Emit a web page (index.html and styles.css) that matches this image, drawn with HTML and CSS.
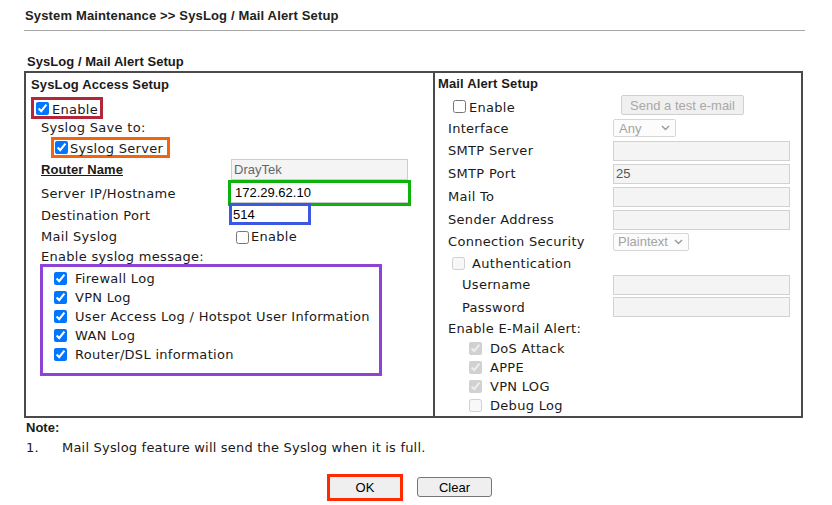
FILE: index.html
```html
<!DOCTYPE html>
<html>
<head>
<meta charset="utf-8">
<title>SysLog / Mail Alert Setup</title>
<link rel="stylesheet" href="styles.css">
</head>
<body>
<div class="page">
  <div class="hdr">System Maintenance &gt;&gt; SysLog / Mail Alert Setup</div>
  <div class="rule"></div>
  <div class="caption">SysLog / Mail Alert Setup</div>
  <div class="tbl">
    <div class="cell left">
      <div class="title">SysLog Access Setup</div>
      <div class="r-enable"><label class="hl hl-red"><input type="checkbox" class="cb" checked><span class="t">Enable</span></label></div>
      <div class="r-save">Syslog Save to:</div>
      <div class="r-server"><label class="hl hl-orange"><input type="checkbox" class="cb" checked><span class="t">Syslog Server</span></label></div>
      <div class="lrow r-name"><span class="lab bold">Router Name</span><input class="txt ro" value="DrayTek" readonly></div>
      <div class="lrow r-ip"><span class="lab">Server IP/Hostname</span><span class="hl hl-green"><input class="txt bare ip" value="172.29.62.10"></span></div>
      <div class="lrow r-port"><span class="lab">Destination Port</span><span class="hl hl-blue"><input class="txt bare port" value="514"></span></div>
      <div class="lrow r-mail"><span class="lab">Mail Syslog</span><input type="checkbox" class="cb cb-mail"><span>Enable</span></div>
      <div class="r-msg">Enable syslog message:</div>
      <div class="hl-purple">
        <label class="item"><input type="checkbox" class="cb" checked><span>Firewall Log</span></label>
        <label class="item"><input type="checkbox" class="cb" checked><span>VPN Log</span></label>
        <label class="item"><input type="checkbox" class="cb" checked><span>User Access Log / Hotspot User Information</span></label>
        <label class="item"><input type="checkbox" class="cb" checked><span>WAN Log</span></label>
        <label class="item"><input type="checkbox" class="cb" checked><span>Router/DSL information</span></label>
      </div>
    </div>
    <div class="cell right">
      <div class="title">Mail Alert Setup</div>
      <div class="r-en2">
        <label class="en2-lab"><input type="checkbox" class="cb"><span class="t2">Enable</span></label>
        <button class="btn-test" disabled>Send a test e-mail</button>
      </div>
      <div class="rrow h22"><span class="rlab">Interface</span><span class="sel sel-any">Any<svg class="chev" width="9" height="6" viewBox="0 0 9 6"><polyline points="1,1 4.5,4.5 8,1" fill="none" stroke="#999" stroke-width="1.4"/></svg></span></div>
      <div class="rrow h23"><span class="rlab">SMTP Server</span><input class="txt dis" disabled></div>
      <div class="rrow h23"><span class="rlab">SMTP Port</span><input class="txt dis" value="25" disabled></div>
      <div class="rrow h23"><span class="rlab">Mail To</span><input class="txt dis" disabled></div>
      <div class="rrow h23"><span class="rlab">Sender Address</span><input class="txt dis" disabled></div>
      <div class="rrow h21"><span class="rlab">Connection Security</span><span class="sel sel-plain">Plaintext<svg class="chev" width="9" height="6" viewBox="0 0 9 6"><polyline points="1,1 4.5,4.5 8,1" fill="none" stroke="#999" stroke-width="1.4"/></svg></span></div>
      <label class="r-auth"><input type="checkbox" class="cb" disabled><span>Authentication</span></label>
      <div class="rrow sub h23"><span class="rlab">Username</span><input class="txt dis" disabled></div>
      <div class="rrow sub h22"><span class="rlab">Password</span><input class="txt dis" disabled></div>
      <div class="r-alert">Enable E-Mail Alert:</div>
      <label class="aitem"><input type="checkbox" class="cb" checked disabled><span>DoS Attack</span></label>
      <label class="aitem"><input type="checkbox" class="cb" checked disabled><span>APPE</span></label>
      <label class="aitem"><input type="checkbox" class="cb" checked disabled><span>VPN LOG</span></label>
      <label class="aitem"><input type="checkbox" class="cb" disabled><span>Debug Log</span></label>
    </div>
  </div>
  <div class="note-h">Note:</div>
  <div class="note-1"><span class="num">1.</span><span>Mail Syslog feature will send the Syslog when it is full.</span></div>
  <div class="btns">
    <span class="hl-ok"><button class="btn btn-ok">OK</button></span>
    <button class="btn btn-clear">Clear</button>
  </div>
</div>
</body>
</html>
```
FILE: styles.css
```css
* { box-sizing: border-box; }
body {
  margin: 0;
  background: #fff;
  font-family: "DejaVu Sans", Verdana, sans-serif;
  font-size: 13px;
  letter-spacing: 0.3px;
  color: #1a1a1a;
}
.page { width: 832px; padding: 8px 0 0 24px; }

.hdr {
  font: bold 13px/16px "Liberation Sans", Arial, sans-serif;
  letter-spacing: 0.15px;
  color: #222;
  padding-left: 1px;
}
.rule { width: 781px; height: 1px; background: #a6a6a6; margin-top: 6px; }
.caption {
  margin-top: 23px;
  margin-bottom: 1px;
  font: bold 13px/16px "Liberation Sans", Arial, sans-serif;
  letter-spacing: 0.05px;
  color: #1a1a1a;
  padding-left: 3px;
}

.tbl {
  display: flex;
  width: 779px;
  height: 347px;
  border: 2px solid #4a4a4a;
}
.left { width: 409px; border-right: 2px solid #4a4a4a; }
.right { flex: 1; }

.title {
  height: 23px;
  font: bold 13px/23px "Liberation Sans", Arial, sans-serif;
  letter-spacing: 0.15px;
  padding-left: 5px;
  color: #1a1a1a;
}
.right .title { height: 22px; line-height: 22px; padding-left: 3px; }

.cb { margin: 0; width: 13px; height: 13px; flex: none; }

.hl { display: flex; align-items: center; border-style: solid; border-width: 3px; }
.hl-red { width: 72px; height: 22px; border-color: #b3263a; padding-left: 2px; }
.hl-red .t { margin-left: 3px; padding-top: 2px; }
.hl-orange { width: 119px; height: 21px; border-color: #f0650e; padding-left: 1px; }
.hl-orange .t { margin-left: 2px; padding-top: 1px; }
.hl-green { width: 183px; height: 26px; border-color: #0db20d; margin-left: -3px; }
.hl-blue { width: 82px; height: 22px; border-color: #3b58e2; margin-left: -2px; }

.r-enable { height: 23px; padding: 1px 0 0 5px; }
.r-save { height: 18px; line-height: 18px; padding-left: 15px; }
.r-server { height: 21px; padding-left: 25px; }

.lrow { display: flex; align-items: center; padding-left: 15px; }
.lab { width: 190px; flex: none; }
.bold {
  font: bold 13px "Liberation Sans", Arial, sans-serif;
  letter-spacing: 0.1px;
  text-decoration: underline;
}
.r-name { height: 22px; }
.r-name .txt { align-self: flex-end; }
.r-ip { height: 26px; }
.r-port { height: 22px; margin-top: -3px; }
.r-port .lab { padding-top: 2px; }
.r-mail { height: 23px; }
.cb-mail { margin-left: 5px; margin-right: 2px; margin-top: 2px; }
.r-msg { height: 16px; line-height: 16px; padding-left: 15px; padding-top: 1px; }

.hl-purple {
  margin-left: 14px;
  width: 342px;
  height: 112px;
  border: 3px solid #8f43d6;
  padding: 2px 0 0 11px;
}
.item { display: flex; align-items: center; height: 19px; }
.item .cb { margin-right: 8px; }

.txt {
  margin: 0;
  width: 177px;
  height: 21px;
  font: 13px "Liberation Sans", Arial, sans-serif;
  letter-spacing: 0;
  color: #000;
  border: 1px solid #cfcfcf;
  background: #fff;
  outline: none;
  padding: 0 2px;
}
.ro { background: #f4f4f4; color: #666; border-color: #cdcdcd; }
.bare { border: none; }
.ip { height: 20px; padding-left: 4px; border-bottom: 1px solid #c8c8c8; }
.port { width: 76px; height: 16px; padding-left: 1px; }
.dis { height: 20px; background: #f4f4f4; color: #555; border-color: #d2d2d2; }

.r-en2 { height: 22px; display: flex; padding-left: 18px; }
.en2-lab { width: 168px; display: flex; align-items: center; }
.en2-lab .t2 { margin-left: 3px; padding-top: 3px; }
.btn-test {
  margin: 0;
  width: 123px;
  height: 20px;
  padding: 0;
  font: 13px "Liberation Sans", Arial, sans-serif;
  letter-spacing: 0;
  color: #a8a8a8;
  background: #f0f0f0;
  border: 1px solid #d0d0d0;
  border-radius: 2px;
}

.rrow { display: flex; align-items: center; padding-left: 13px; }
.rrow.sub { padding-left: 27px; }
.rlab { width: 165px; flex: none; }
.rrow.sub .rlab { width: 151px; }
.h21 { height: 21px; }
.h22 { height: 22px; }
.h23 { height: 23px; }

.sel {
  display: flex;
  align-items: center;
  justify-content: space-between;
  height: 18px;
  font: 13px "Liberation Sans", Arial, sans-serif;
  letter-spacing: 0;
  color: #a3a3a3;
  background: #fcfcfc;
  border: 1px solid #d6d6d6;
  border-radius: 2px;
  padding: 0 5px 0 5px;
}
.sel-any { width: 63px; }
.sel-plain { width: 76px; padding-left: 4px; }
.chev { flex: none; }

.r-auth { display: flex; align-items: center; height: 21px; padding: 2px 0 0 17px; }
.r-auth .cb { margin-right: 7px; }
.r-alert { height: 21px; line-height: 21px; padding-left: 13px; }
.aitem { display: flex; align-items: center; height: 19px; padding-left: 34px; }
.aitem .cb { margin-right: 8px; }

.note-h {
  margin-top: 2px;
  font: bold 13px/16px "Liberation Sans", Arial, sans-serif;
  letter-spacing: 0;
  padding-left: 2px;
  color: #1a1a1a;
}
.note-1 { margin-top: 3px; display: flex; line-height: 18px; padding-left: 2px; letter-spacing: 0.2px; }
.num { width: 36px; flex: none; }

.btns { margin-top: 17px; padding-left: 303px; display: flex; align-items: flex-start; }
.hl-ok { display: flex; width: 76px; height: 27px; border: 3px solid #ff2a00; }
.btn {
  margin: 0;
  padding: 0;
  font: 13px "Liberation Sans", Arial, sans-serif;
  letter-spacing: 0;
  color: #000;
  background: #efefef;
  border: 1px solid #767676;
  border-radius: 3px;
}
.btn-ok { width: 70px; height: 21px; border: none; border-radius: 0; }
.btn-clear { width: 75px; height: 20px; margin: 3px 0 0 14px; }
```
